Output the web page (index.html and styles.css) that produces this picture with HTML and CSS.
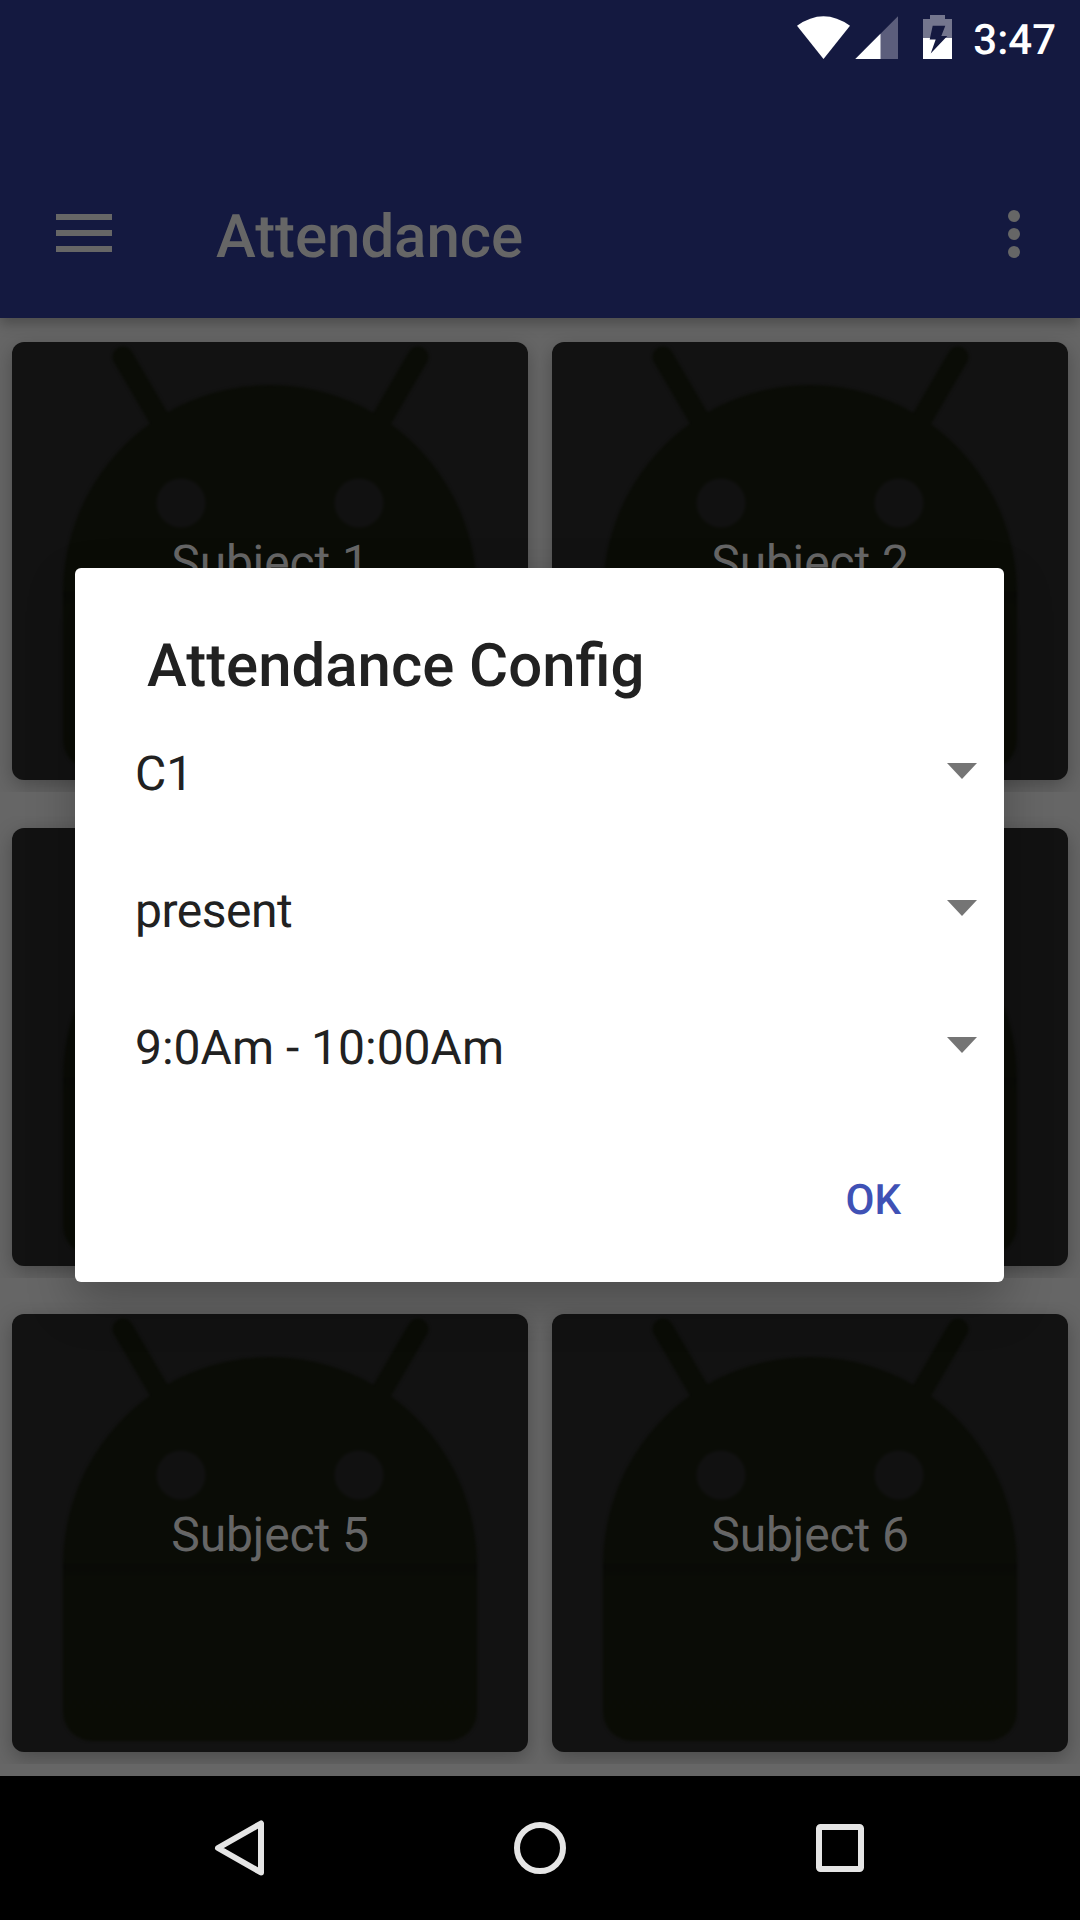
FILE: index.html
```html
<!DOCTYPE html>
<html lang="en">
<head>
<meta charset="utf-8">
<title>Attendance</title>
<link rel="stylesheet" href="styles.css">
</head>
<body>
<svg class="defs" width="0" height="0" aria-hidden="true">
  <defs>
    <linearGradient id="torso" x1="0" y1="0" x2="0" y2="1">
      <stop offset="0" stop-color="#080906"/>
      <stop offset="0.09" stop-color="#0a0c06"/>
      <stop offset="1" stop-color="#0a0c05"/>
    </linearGradient>
    <filter id="soft" x="-5%" y="-5%" width="110%" height="110%" color-interpolation-filters="sRGB"><feGaussianBlur stdDeviation="1.6"/></filter>
    <symbol id="robot" viewBox="0 0 516 438">
      <g filter="url(#soft)">
        <path d="M111 15L156 92M406 15L361 92" stroke="#0a0c06" stroke-width="21" stroke-linecap="round"/>
        <path d="M51 251a207 208 0 0 1 414 0z" fill="#0a0c06"/>
        <path d="M51 250h414v148a29 29 0 0 1-29 29H80a29 29 0 0 1-29-29z" fill="url(#torso)"/>
        <circle cx="169" cy="161" r="24.500" fill="#111"/>
        <circle cx="347" cy="161" r="24.500" fill="#111"/>
      </g>
    </symbol>
  </defs>
</svg>
<div class="screen">
  <header class="header">
    <div class="status">
      <svg width="160" height="72" viewBox="795 0 160 72">
        <path d="M797 25.8Q823.500 6.800 850 25.800L823.500 59z" fill="#fff"/>
        <path d="M898 16.300V59H855.300z" fill="#5c5e7c"/>
        <path d="M880.500 33.800V59H855.300z" fill="#fff"/>
        <path d="M930 15h15v4h7v19h-29V19h7z" fill="#74768e"/>
        <path d="M923 38h29v21h-29z" fill="#fff"/>
        <path d="M932.700 25.700h12.600l-4 10.300h6L930.700 53.500l5-14H929.700z" fill="#141940"/>
      </svg>
      <span class="clock">3:47</span>
    </div>
    <div class="toolbar">
      <svg class="menu" width="72" height="72" viewBox="0 0 72 72"><path d="M8 16h56v6H8zM8 32h56v6H8zM8 48h56v6H8z" fill="#666"/></svg>
      <h1 class="title">Attendance</h1>
      <svg class="more" width="72" height="72" viewBox="0 0 72 72" fill="#666"><circle cx="36" cy="18" r="6"/><circle cx="36" cy="36" r="6"/><circle cx="36" cy="54" r="6"/></svg>
    </div>
  </header>
  <main class="grid">
    <div class="cell"><div class="card"><svg class="art"><use href="#robot"/></svg><span class="label">Subject 1</span></div></div>
    <div class="cell"><div class="card"><svg class="art"><use href="#robot"/></svg><span class="label">Subject 2</span></div></div>
    <div class="cell"><div class="card"><svg class="art"><use href="#robot"/></svg></div></div>
    <div class="cell"><div class="card"><svg class="art"><use href="#robot"/></svg></div></div>
    <div class="cell"><div class="card"><svg class="art"><use href="#robot"/></svg><span class="label">Subject 5</span></div></div>
    <div class="cell"><div class="card"><svg class="art"><use href="#robot"/></svg><span class="label">Subject 6</span></div></div>
  </main>
  <section class="dialog" role="dialog">
    <h2 class="dialog-title">Attendance Config</h2>
    <div class="spinner"><span>C1</span><svg class="caret" width="30" height="16" viewBox="0 0 30 16"><path d="M0 0h30L15 16z"/></svg></div>
    <div class="spinner"><span class="status-value">present</span><svg class="caret" width="30" height="16" viewBox="0 0 30 16"><path d="M0 0h30L15 16z"/></svg></div>
    <div class="spinner"><span>9:0Am - 10:00Am</span><svg class="caret" width="30" height="16" viewBox="0 0 30 16"><path d="M0 0h30L15 16z"/></svg></div>
    <div class="actions"><span class="ok">OK</span></div>
  </section>
  <nav class="nav">
    <svg width="60" height="60" viewBox="0 0 60 60"><path d="M51 5.500V54.500L8 30z"/></svg>
    <svg width="60" height="60" viewBox="0 0 60 60"><circle cx="30" cy="30" r="23"/></svg>
    <svg width="60" height="60" viewBox="0 0 60 60"><rect x="9" y="9" width="42" height="42" rx="1.500"/></svg>
  </nav>
</div>
</body>
</html>
```
FILE: styles.css
```css
* { box-sizing: border-box; }
body { margin: 0; font-family: Roboto, "Noto Sans", sans-serif; text-rendering: geometricPrecision; }
.defs { position: absolute; }
h1, h2 { margin: 0; font-weight: 500; font-size: 60px; line-height: 70px; }
svg { display: block; flex: none; }

.screen {
  position: relative;
  display: flex;
  flex-direction: column;
  width: 1080px;
  height: 1920px;
  overflow: hidden;
  background: #666;
}

.header {
  position: relative;
  z-index: 1;
  height: 318px;
  background: #141940;
  box-shadow: 0 6px 12px rgba(0, 0, 0, 0.25);
}
.status {
  display: flex;
  justify-content: flex-end;
  gap: 18px;
  height: 150px;
  padding-right: 24px;
}
.clock {
  padding-top: 16px;
  color: #fff;
  font-size: 42px;
  font-weight: 500;
  line-height: 50px;
}
.toolbar {
  display: flex;
  align-items: center;
  height: 168px;
  padding: 0 30px 0 48px;
}
.title { margin-left: 96px; padding-top: 5px; color: #666; letter-spacing: -0.08px; }
.more { margin-left: auto; }

.grid {
  display: grid;
  grid-template-columns: 540px 540px;
  grid-auto-rows: 462px;
  row-gap: 24px;
  height: 1458px;
  padding-top: 12px;
}
.cell { padding: 12px 12px; overflow: hidden; }
.card {
  display: grid;
  place-items: center;
  height: 438px;
  border-radius: 12px;
  background: #121212;
  box-shadow: 0 6px 20px rgba(0, 0, 0, 0.27);
}
.art, .label { grid-area: 1 / 1; }
.art { width: 516px; height: 438px; }
.label { padding-top: 3px; color: #666; font-size: 48px; line-height: 56px; letter-spacing: -0.12px; }

.dialog {
  position: absolute;
  z-index: 2;
  left: 75px;
  top: 568px;
  width: 929px;
  height: 714px;
  padding-top: 63px;
  border-radius: 6px;
  background: #fff;
  color: #212121;
  box-shadow: 0 20px 48px rgba(0, 0, 0, 0.25);
}
.dialog-title { padding: 0 0 4px 72px; height: 74px; font-size: 59.9px; }
.spinner {
  display: flex;
  align-items: center;
  justify-content: space-between;
  height: 137px;
  padding: 0 27px 0 60px;
  font-size: 48px;
  line-height: 56px;
}
.status-value { letter-spacing: -0.5px; }
.caret { margin-bottom: 5px; fill: #757575; }
.actions { display: flex; justify-content: flex-end; padding: 60px 103px 0 0; }
.ok { color: #3f51b5; font-size: 42px; font-weight: 500; line-height: 50px; }

.nav {
  position: relative;
  z-index: 1;
  display: flex;
  align-items: center;
  justify-content: center;
  gap: 240px;
  height: 144px;
  background: #000;
}
.nav svg { fill: none; stroke: #e5e5e5; stroke-width: 6; stroke-linejoin: round; }
```
